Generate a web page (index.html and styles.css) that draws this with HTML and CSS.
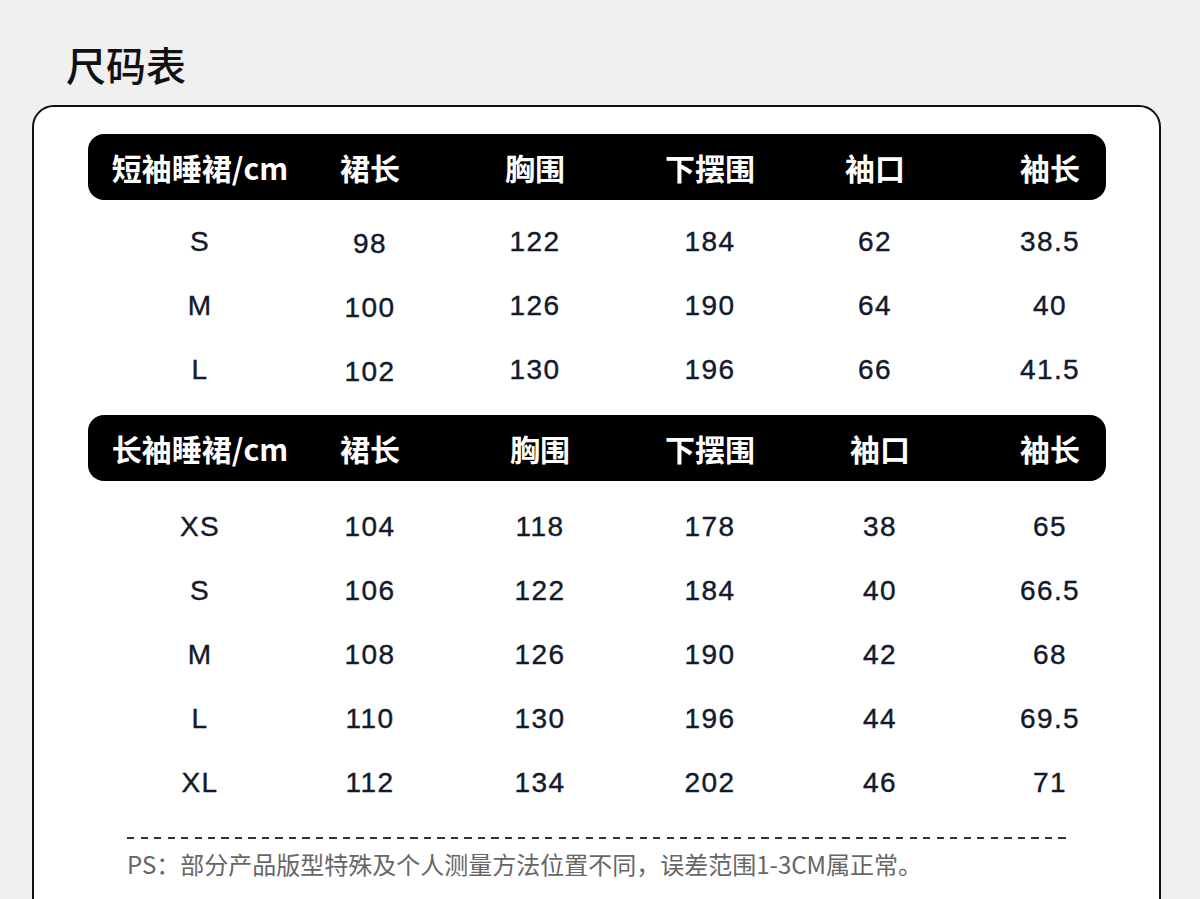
FILE: index.html
```html
<!DOCTYPE html>
<html lang="zh-CN">
<head>
<meta charset="utf-8">
<title>尺码表</title>
<link rel="stylesheet" href="styles.css">
</head>
<body>
<h1 class="title">尺码表</h1>
<div class="card">
  <section class="table table-short">
    <div class="head row-grid">
      <span>短袖睡裙/cm</span><span>裙长</span><span>胸围</span><span>下摆围</span><span>袖口</span><span>袖长</span>
    </div>
    <div class="body">
      <div class="row row-grid"><span>S</span><span class="low">98</span><span>122</span><span>184</span><span>62</span><span>38.5</span></div>
      <div class="row row-grid"><span>M</span><span class="low">100</span><span>126</span><span>190</span><span>64</span><span>40</span></div>
      <div class="row row-grid"><span>L</span><span class="low">102</span><span>130</span><span>196</span><span>66</span><span>41.5</span></div>
    </div>
  </section>
  <section class="table table-long">
    <div class="head row-grid">
      <span>长袖睡裙/cm</span><span>裙长</span><span>胸围</span><span>下摆围</span><span>袖口</span><span>袖长</span>
    </div>
    <div class="body">
      <div class="row row-grid"><span>XS</span><span>104</span><span>118</span><span>178</span><span>38</span><span>65</span></div>
      <div class="row row-grid"><span>S</span><span>106</span><span>122</span><span>184</span><span>40</span><span>66.5</span></div>
      <div class="row row-grid"><span>M</span><span>108</span><span>126</span><span>190</span><span>42</span><span>68</span></div>
      <div class="row row-grid"><span>L</span><span>110</span><span>130</span><span>196</span><span>44</span><span>69.5</span></div>
      <div class="row row-grid"><span>XL</span><span>112</span><span>134</span><span>202</span><span>46</span><span>71</span></div>
    </div>
  </section>
  <div class="note">
    <div class="dash"></div>
    <p class="ps">PS：部分产品版型特殊及个人测量方法位置不同，误差范围1-3CM属正常。</p>
  </div>
</div>
</body>
</html>
```

FILE: styles.css
```css
html, body {
  margin: 0;
  padding: 0;
  overflow: hidden;
}
body {
  background: #f0f0f0;
  font-family: "Noto Sans CJK SC", "Noto Sans", sans-serif;
  width: 1200px;
  height: 899px;
}
.title {
  margin: 0;
  padding: 40px 0 0 66px;
  height: 48px;
  font-size: 40px;
  line-height: 48px;
  font-weight: 500;
  color: #111;
}
.card {
  margin: 17px 0 0 32px;
  width: 1125px;
  height: 900px;
  background: #fff;
  border: 2px solid #111;
  border-radius: 22px;
  box-sizing: content-box;
  padding: 27px 0 0 0;
}
.table {
  margin-left: 54px;
  width: 1018px;
}
.row-grid {
  display: grid;
  grid-template-columns: repeat(6, 170px);
  padding-left: 27px;
  align-items: center;
  justify-items: center;
}
.table-short .row-grid > :nth-child(3),
.table-short .row-grid > :nth-child(5) {
  margin-right: 10px;
}
.head {
  height: 66px;
  background: #000;
  border-radius: 16px;
  color: #fff;
  font-size: 30px;
  font-weight: 700;
  line-height: 66px;
  white-space: nowrap;
}
.body {
  margin-top: 10px;
}
.table-short .body {
  margin-bottom: 13px;
}
.table-long .body {
  margin-top: 14px;
}
.row {
  height: 64px;
  font-family: "Liberation Sans", "Noto Sans CJK SC", sans-serif;
  font-size: 28px;
  color: #131a2c;
  letter-spacing: 1.4px;
  -webkit-text-stroke: 0.4px #131a2c;
}
.row .low {
  padding-top: 4px;
}
.note {
  margin: 22px 0 0 93px;
  width: 941px;
}
.dash {
  height: 2px;
  background: repeating-linear-gradient(to right, #333 0, #333 7px, transparent 7px, transparent 13.5px);
}
.ps {
  margin: 10px 0 0 0;
  font-size: 24px;
  line-height: 30px;
  color: #666;
  white-space: nowrap;
}
```
